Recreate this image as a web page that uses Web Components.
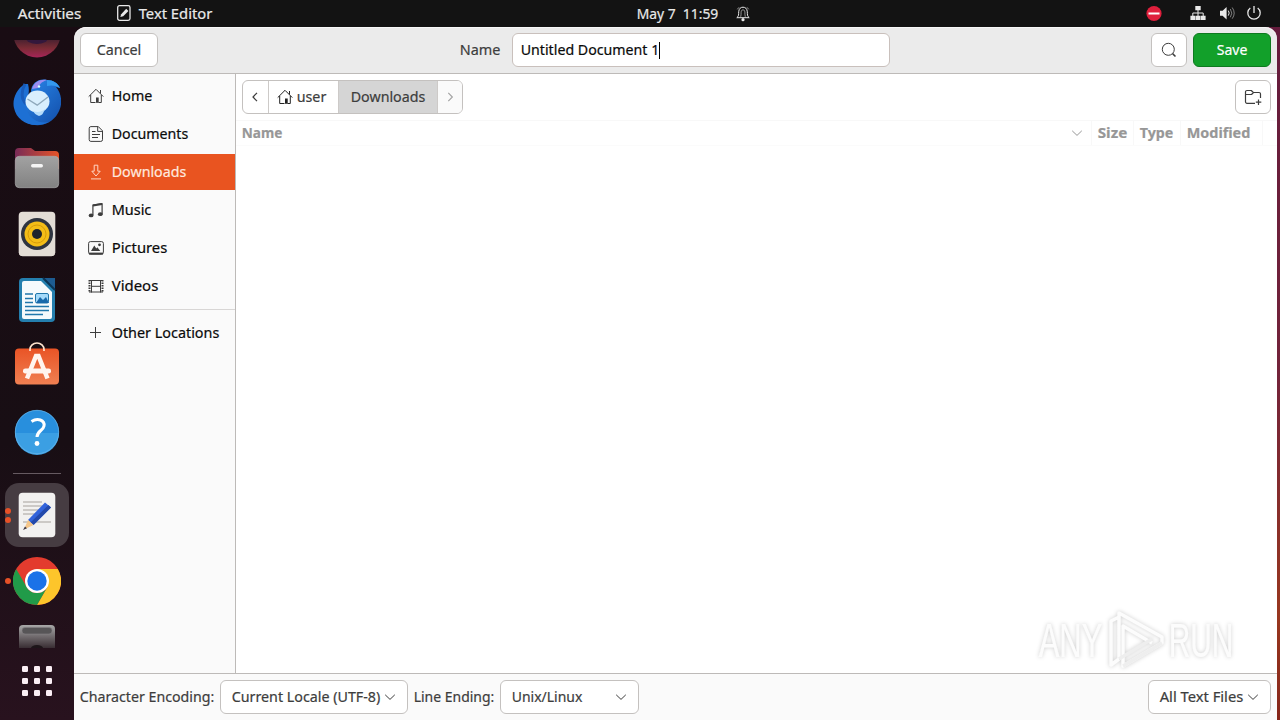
<!DOCTYPE html>
<html lang="en">
<head>
<meta charset="utf-8">
<title>Text Editor</title>
<style>
html,body{margin:0;height:100%;overflow:hidden;background:#1a0d14}
body{font:14.5px/20px "Noto Sans","Open Sans",sans-serif;color:#3d3d3d}
</style>
</head>
<body>
<desktop-shell></desktop-shell>
<script>
const define = (name, html) => {
  const t = document.createElement('template');
  t.innerHTML = html;
  customElements.define(name, class extends HTMLElement {
    constructor() {
      super();
      this.attachShadow({mode: 'open'}).append(t.content.cloneNode(true));
    }
  });
};

/* Symbolic 16px icons */
const glyphs = {
  home: '<path d="M.7 8.6 8 1.3l7.3 7.3M2.7 7v7.500h4.800M10.500 14.500h2.800V7"/><path d="M12.500 2v3.500" /><path d="M8 9.500h2.700v5.300H8z" fill="currentColor" stroke="none"/>',
  doc: '<path d="M2.900.6h7.400l4.200 4.200v8.900a1.700 1.700 0 0 1-1.700 1.700H2.900a1.700 1.700 0 0 1-1.700-1.700V2.300A1.700 1.700 0 0 1 2.900.6zM9.700.8v4.600h4.700M4 5.500h3.500M4 8.500h8M4 11.500h6"/>',
  down: '<path d="M6.200 1.200h3.600v6h2.400L8 12 3.800 7.200h2.400zM3 14.900h10"/>',
  music: '<path d="M4.900 13V3l9.200-1.500v10.500" stroke-width="1.200"/><path d="M4.900 3.500l9.200-1.500" stroke-width="2"/><ellipse cx="3.100" cy="13.400" rx="2.400" ry="1.900" fill="currentColor" stroke="none"/><ellipse cx="12.300" cy="12.200" rx="2.400" ry="1.900" fill="currentColor" stroke="none"/>',
  pic: '<rect x=".6" y="1.600" width="14.800" height="12.600" rx="1.800"/><path d="M1 12.600h14v1.900H1z" fill="currentColor" stroke="none"/><path d="M3 11 6.300 5.500 8.300 8.500l1-1.200L12.300 11z" fill="currentColor" stroke="none"/><circle cx="11.500" cy="4.800" r="1.400" fill="currentColor" stroke="none"/>',
  video: '<path d="M3.500 2v12.500M12.500 2v12.500M1 2.500h14M1 14h14M3.500 8.300h9"/><path d="M1.500 2v12.500M14.500 2v12.500" stroke-dasharray="1.500 1" stroke-width="2"/>',
  plus: '<path d="M7.500 2v11M2 7.500h11"/>',
  search: '<circle cx="7.300" cy="7.300" r="6"/><path d="m11.600 11.600 2.900 2.900" stroke-width="1.500"/>',
  left: '<path d="M9 3.800 5 8l4 4.200" stroke-width="1.200"/>',
  right: '<path d="M6.300 3.800 10.300 8l-4 4.200" stroke-width="1.200"/>',
  chevron: '<path d="m3.200 5.800 4.800 4.600 4.800-4.600"/>',
  folder: '<path d="M10 14.300H2A1.500 1.500 0 0 1 .5 12.800V3A1.500 1.500 0 0 1 2 1.500h4.300L8.300 3.500H14A1.500 1.500 0 0 1 15.500 5v4M.5 5.500h6l2-2M13.500 10.500v5.500M10.800 13.200h5.500" stroke-width="1.200"/>',
  editor: '<rect x="1.700" y=".7" width="12.300" height="14.600" rx="1.800" stroke-width="1.300"/><path d="M4.300 12 5.200 9.200l5-5.400 2.200 2.200-5.200 5.300z" fill="currentColor" stroke="none"/>',
  bell: '<path d="M1.800 12.700c2.200-1.500 1.700-3.200 1.900-6C4 3.500 5.700 2.200 8 2.200s4 1.300 4.300 4.500c.2 2.800-.3 4.500 1.900 6z"/><path d="M5.700 11.800c.5-1.500.3-3.300.4-4.600.1-1.600.8-2.300 1.900-2.300s1.800.7 1.900 2.300c.1 1.300-.1 3.100.4 4.600M2.300 4.300 4 2.300M13.700 4.300 12 2.300" stroke-width=".6"/><circle cx="8" cy="14.700" r="1.600" fill="currentColor" stroke="none"/>',
  net: '<path d="M5.300 1h5.400v4.200H5.300zM.4 10.700h4.800V15H.4zM5.600 10.700h4.800V15H5.600zM10.800 10.700h4.800V15h-4.800z" fill="currentColor" stroke="none"/><path d="M8 5v6M2.800 11V8h10.400v3"/>',
  volume: '<path d="M1 5.700h2.600L7.600 2v12.500l-4-3.700H1z" fill="currentColor" stroke="none"/><path d="M9.300 5.600q1.800 2.400 0 5"/><path d="M11.300 4q3 4.200 0 8.300M13.200 2.500q4 5.700 0 11.200" opacity=".5"/>',
  power: '<path d="M4.300 3a6.200 6.200 0 1 0 7.400 0M8 1v7" stroke-width="1.300"/>',
  stop: '<circle cx="8" cy="8.500" r="7.600" fill="#df1f3c" stroke="none"/><path d="M2.500 8.500h11" stroke="#fff" stroke-width="2"/>'
};
customElements.define('sym-icon', class extends HTMLElement {
  constructor() {
    super();
    this.attachShadow({mode: 'open'}).innerHTML = `<style>:host{display:block;flex:none;width:16px;height:16px}svg{display:block}</style>
      <svg width="16" height="16" viewBox="0 0 16 16" overflow="visible" fill="none" stroke="currentColor" stroke-linejoin="round">${glyphs[this.getAttribute('name')]}</svg>`;
  }
});

/* Launcher artwork, 48px */
const art = {
  ring: '<defs><linearGradient id="g" x1="0" y1="0" x2="0" y2="1"><stop offset=".6" stop-color="#44202f"/><stop offset=".8" stop-color="#7a2c35"/><stop offset="1" stop-color="#a62458"/></linearGradient></defs><circle cx="24" cy="21" r="23.500" fill="url(#g)"/><ellipse cx="24" cy="25" rx="11" ry="6" fill="#33183c"/>',
  bird: '<defs><linearGradient id="g" x1="0" y1="0" x2="1" y2="1"><stop stop-color="#2b8cf0"/><stop offset="1" stop-color="#124da8"/></linearGradient></defs><path d="M18 14C18 5 26 0 34 2c6 0 11 3 13 8l-4-1c6 7 7 18 2 26-8 15-29 16-38 4z" fill="url(#g)"/><path d="M19 11c2-7 8-10 15-9-6 2-8 5-9 8z" fill="#9d8df0"/><path d="M34 2c6 0 11 3 13 8-5-3-9-3-13-2z" fill="#3498ed"/><path d="M12 6C3 11-1 22 1 30c2 10 11 17 22 17 5 0 9-1 13-3-9 2-19-2-22-12-2-8 4-15 1-26z" fill="#1d70d4"/><path d="M12 6C8 13 8 21 13 26" fill="none" stroke="#185bb9" stroke-width="3"/><ellipse cx="24.500" cy="23.500" rx="12" ry="11" fill="#d9effd"/><path d="m14.500 21 9.700 6.200L35 19" fill="none" stroke="#8fa9bb" stroke-width="1.400"/><path d="M20 33c4 2 9 1 12-2-2 4-2 6-6 7-3-1-5-3-6-5z" fill="#b5dcfa"/><circle cx="26" cy="8.500" r="1.200" fill="#dff"/>',
  files: '<defs><linearGradient id="g"><stop stop-color="#782b57"/><stop offset="1" stop-color="#e65428"/></linearGradient><linearGradient id="h" x1="0" y1="0" x2="0" y2="1"><stop stop-color="#a2a2a2"/><stop offset="1" stop-color="#828282"/></linearGradient></defs><path d="M2 8a4 4 0 0 1 4-4h12l4 3h20a4 4 0 0 1 4 4v14H2z" fill="url(#g)"/><rect x="2.300" y="12.300" width="43.400" height="31.400" rx="4" fill="url(#h)" stroke="#aaa" stroke-width=".7"/><rect x="18" y="20" width="12" height="3.500" rx="1.700" fill="#f5f5f5"/>',
  speaker: '<rect x="5.700" y="1.700" width="36.600" height="44.600" rx="4" fill="#e3ddd6"/><circle cx="24" cy="24" r="16" fill="#2e3440"/><circle cx="24" cy="24" r="12.500" fill="#f4bd17"/><circle cx="24" cy="24" r="9" fill="none" stroke="#d69c0a"/><circle cx="24" cy="24" r="5" fill="#20242c"/>',
  writer: '<path d="M6 6a4 4 0 0 1 4-4h20l12 12v28a4 4 0 0 1-4 4H10a4 4 0 0 1-4-4z" fill="#247fae"/><path d="M31 2h11v12z" fill="#1d5c91"/><path d="m30 2 12 12" stroke="#0a3555" stroke-width="2"/><path d="M9 7a2 2 0 0 1 2-2h17l11 11v25a2 2 0 0 1-2 2H11a2 2 0 0 1-2-2z" fill="#f5fafc"/><path d="M12 18h8M12 22.500h8M12 26.500h8M12 30.500h24M12 34.500h24M12 38.500h18" stroke="#2077ab" stroke-width="1.700"/><rect x="22.500" y="17.500" width="13" height="9.500" rx="1.500" fill="#a4dafa" stroke="#2077ab"/><path d="m23 27 4-6 3 3 3-3 3 6z" fill="#1769ab"/>',
  store: '<defs><linearGradient id="g" x1="0" y1="0" x2="0" y2="1"><stop stop-color="#e95426"/><stop offset="1" stop-color="#f08052"/></linearGradient></defs><rect x="2" y="6.500" width="44" height="36" rx="4" fill="url(#g)"/><path d="M17 9V7.500a7 6.500 0 0 1 14 0V9" fill="none" stroke="#ffe4ce" stroke-width="1.700"/><path d="M14 36.500 23 14h2.500L34.500 36.500" fill="none" stroke="#fff5ef" stroke-width="4.500"/><rect x="10" y="26.500" width="28" height="5" rx="2.300" fill="#fff5ef"/>',
  help: '<circle cx="24" cy="24" r="22" fill="#288fdd"/><path d="M2 25h44a22 22 0 0 1-44 0z" fill="#3b9fe3"/><circle cx="24" cy="24" r="21.700" fill="none" stroke="#68b6ea" stroke-width=".7"/><path d="M18.500 13.500c6-4 13.500-1.500 12.500 4.500-.7 4.500-7 5-7 11" fill="none" stroke="#fff" stroke-width="3"/><circle cx="24" cy="35.500" r="2.400" fill="#fff"/>',
  note: '<rect x="5.700" y="1.700" width="36.600" height="44.600" rx="4" fill="#f2f1f0"/><path d="M10 11h19M10 15h19M10 19h18M10 23h14M10 31h28" stroke="#c0bcb8" stroke-width="1.300"/><path d="m15 29 17-17.500 6 5L20.500 34z" fill="#3263db"/><path d="m17.500 31.500 18-17.500 2.500 2.500L20.500 34z" fill="#2449aa"/><path d="m15 29 5.500 5L11 38.500z" fill="#f4c589"/><path d="m12 35.500 2 1.700L10 39z" fill="#3d3846"/>',
  chrome: '<circle cx="24" cy="24" r="24" fill="#e33b2e"/><path d="M24 12h20.800A24 24 0 0 1 24 48l10.400-18z" fill="#fdc52b"/><path d="M3.200 12A24 24 0 0 0 24 48l10.400-18A12 12 0 0 1 13.600 30z" fill="#219b49"/><circle cx="24" cy="24" r="12" fill="#fff"/><circle cx="24" cy="24" r="9.700" fill="#1b72e8"/>',
  disk: '<defs><linearGradient id="g" x1="0" y1="0" x2="0" y2="1"><stop stop-color="#a8a8a8"/><stop offset=".55" stop-color="#33272d"/></linearGradient></defs><rect x="6" y="2" width="36" height="44" rx="4" fill="url(#g)"/><rect x="9" y="4.500" width="30" height="6.500" rx="3" fill="#575557" stroke="#858085" stroke-width=".6"/><ellipse cx="24" cy="25" rx="6" ry="3" fill="#1d1519"/>',
  grid: [9,21,33].map(y => [9,21,33].map(x => `<rect x="${x}" y="${y}" width="6" height="6" rx="1.300" fill="#fbeff5"/>`).join('')).join('')
};
customElements.define('dock-item', class extends HTMLElement {
  constructor() {
    super();
    const dots = +this.getAttribute('dots') || 0;
    this.attachShadow({mode: 'open'}).innerHTML = `<style>
      :host{display:flex;flex:none;height:66px;position:relative;align-items:center;justify-content:center;overflow:hidden}
      :host([first]){height:29px;margin-top:13px;align-items:flex-start}
      :host([first]) svg{margin-top:-27px}
      :host([last]){height:34px;align-items:flex-start}
      :host([last]) svg{margin-top:9px}
      .tile{display:flex;width:64px;height:64px;align-items:center;justify-content:center;border-radius:14px}
      :host([active]) .tile{background:#463c42}
      :host([first]) .tile,:host([last]) .tile{align-items:flex-start;height:auto}
      .dots{position:absolute;left:5px;top:0;bottom:0;display:flex;flex-direction:column;gap:3px;justify-content:center}
      .dots i{width:6px;height:6px;border-radius:50%;background:#e65127}
      svg{display:block;flex:none}
    </style><div class="tile"><svg width="48" height="48" viewBox="0 0 48 48">${art[this.getAttribute('art')]}</svg></div><div class="dots">${'<i></i>'.repeat(dots)}</div>`;
  }
});

define('app-dock', `<style>
  :host{display:flex;flex-direction:column;flex:none;width:74px;background:linear-gradient(#190c13,#180e14 60%,#28121e)}
  hr{flex:none;width:48px;height:1px;border:0;margin:8px auto;background:#665a61}
</style>
<dock-item art="ring" first></dock-item><dock-item art="bird"></dock-item><dock-item art="files"></dock-item>
<dock-item art="speaker"></dock-item><dock-item art="writer"></dock-item><dock-item art="store"></dock-item>
<dock-item art="help"></dock-item><hr><dock-item art="note" active dots="2"></dock-item>
<dock-item art="chrome" dots="1"></dock-item><dock-item art="disk" last></dock-item><dock-item art="grid"></dock-item>`);

define('top-bar', `<style>
  :host{display:grid;grid-template-columns:1fr auto 1fr;height:27px;flex:none;background:#131313;color:#e9e9e9;align-items:center}
  div{display:flex;align-items:center}
  sym-icon{margin-bottom:2px}
  .l{padding-left:17px}.l sym-icon{margin:0 6px 1px 34px}
  .c{gap:16px;padding-left:107px}
  .r{justify-content:flex-end;padding-right:18px}
</style>
<div class="l"><fit-text w="65">Activities</fit-text><sym-icon name="editor"></sym-icon><fit-text w="75">Text Editor</fit-text></div>
<div class="c"><fit-text w="83">May 7&nbsp; 11:59</fit-text><sym-icon name="bell"></sym-icon></div>
<div class="r"><sym-icon name="stop" style="margin-right:28px"></sym-icon><sym-icon name="net" style="margin-right:13px"></sym-icon><sym-icon name="volume" style="margin-right:11px"></sym-icon><sym-icon name="power"></sym-icon></div>`);

define('push-button', `<style>
  :host{display:flex;box-sizing:border-box;height:34px;align-items:center;justify-content:center;flex:none;background:#fff;border:1px solid #c4c1bf;border-radius:6px}
  :host([primary]){background:#12a02a;border-color:#0d7a1f;color:#fff}
</style><slot></slot>`);

define('dialog-header', `<style>
  :host{display:flex;box-sizing:border-box;height:47px;flex:none;align-items:center;padding:0 6px;background:#ebebeb;border-bottom:1px solid #bdbab8;border-radius:12px 12px 0 0;box-shadow:inset 0 1px #f7f7f7}
  .name{margin:0 auto;display:flex;align-items:center;gap:11px;padding-left:40px}
  .entry{display:flex;align-items:center;box-sizing:border-box;width:378px;height:34px;padding-left:7px;border:1px solid #c9c0bc;border-radius:6px;background:#fff;color:#0a0a0a}
  .caret{width:1px;height:17px;background:#000;margin-left:-1px}
</style>
<push-button style="width:78px"><fit-text w="46">Cancel</fit-text></push-button>
<div class="name"><fit-text w="42">Name</fit-text><div class="entry"><fit-text w="140">Untitled Document 1</fit-text><div class="caret"></div></div></div>
<push-button style="width:36px;margin-right:6px"><sym-icon name="search"></sym-icon></push-button>
<push-button primary style="width:78px"><fit-text w="32">Save</fit-text></push-button>`);

define('place-row', `<style>
  :host{display:flex;flex:none;height:36px;margin-bottom:2px;align-items:center;gap:7px;padding-left:14px;color:#0a0a0a}
  ::slotted(sym-icon){color:#3d3d3d}
  :host([selected]){background:#e95420;color:#ffe9df}
  :host([selected]) ::slotted(sym-icon){color:#ffd5c3}
</style><slot></slot>`);

define('places-sidebar', `<style>
  :host{display:flex;flex-direction:column;box-sizing:border-box;width:162px;flex:none;padding-top:4px;background:#fafafa;border-right:1px solid #bdbab8}
  hr{width:100%;height:1px;margin:3px 0 5px;border:0;background:#d8d6d5}
</style>
<place-row><sym-icon name="home"></sym-icon><fit-text w="42">Home</fit-text></place-row>
<place-row><sym-icon name="doc"></sym-icon><fit-text w="78">Documents</fit-text></place-row>
<place-row selected><sym-icon name="down"></sym-icon><fit-text w="76">Downloads</fit-text></place-row>
<place-row><sym-icon name="music"></sym-icon><fit-text w="41">Music</fit-text></place-row>
<place-row><sym-icon name="pic"></sym-icon><fit-text w="57">Pictures</fit-text></place-row>
<place-row><sym-icon name="video"></sym-icon><fit-text w="48">Videos</fit-text></place-row>
<hr>
<place-row><sym-icon name="plus"></sym-icon><fit-text w="109">Other Locations</fit-text></place-row>`);

define('path-bar', `<style>
  :host{display:flex;box-sizing:border-box;width:221px;height:34px;border:1px solid #c4c1bf;border-radius:6px;overflow:hidden;background:#fff}
  div{display:flex;align-items:center;justify-content:center;box-sizing:border-box;border-right:1px solid #cdcac8}
  div:last-child{border:0}
</style>
<div style="width:26px"><sym-icon name="left"></sym-icon></div>
<div style="width:70px;gap:3px;padding-right:4px"><sym-icon name="home" style="color:#222"></sym-icon><fit-text w="31">user</fit-text></div>
<div style="width:99px;background:#d5d5d5"><fit-text w="76">Downloads</fit-text></div>
<div style="flex:1;background:#fafafa;color:#a5a5a5"><sym-icon name="right"></sym-icon></div>`);

define('file-list', `<style>
  :host{display:flex;flex-direction:column;flex:1;background:#fff}
  .bar{display:flex;justify-content:space-between;padding:6px 6px 0}
  .head{display:flex;box-sizing:border-box;height:26px;margin-top:6px;align-items:center;border-top:1px solid #f8f8f8;border-bottom:1px solid #fbfbfb;color:#979797;font-weight:700}
  .head div{display:flex;box-sizing:border-box;align-self:stretch;align-items:center;padding-left:5px;border-right:1px solid #f8f8f8}
</style>
<div class="bar"><path-bar></path-bar><push-button style="width:36px"><sym-icon name="folder"></sym-icon></push-button></div>
<div class="head"><div style="width:856px;justify-content:space-between;padding-right:6px"><fit-text w="42">Name</fit-text><sym-icon name="chevron"></sym-icon></div><div style="width:42px"><fit-text w="31">Size</fit-text></div><div style="width:47px;padding-left:5px"><fit-text w="35">Type</fit-text></div><div style="width:82px;padding-left:5px"><fit-text w="65">Modified</fit-text></div></div>`);

define('options-bar', `<style>
  :host{display:flex;box-sizing:border-box;height:47px;flex:none;align-items:center;padding:0 6px 0 5px;background:#fafafa;border-top:1px solid #bdbab8}
  push-button{justify-content:space-between;box-sizing:border-box;padding:0 9px 0 10px}
</style>
<fit-text w="136">Character Encoding:</fit-text>
<push-button style="width:188px;margin:0 5px"><fit-text w="150">Current Locale (UTF-8)</fit-text><sym-icon name="chevron"></sym-icon></push-button>
<fit-text w="82">Line Ending:</fit-text>
<push-button style="width:139px;margin-left:5px"><fit-text w="72">Unix/Linux</fit-text><sym-icon name="chevron"></sym-icon></push-button>
<push-button style="width:123px;margin-left:auto"><fit-text w="85">All Text Files</fit-text><sym-icon name="chevron"></sym-icon></push-button>`);

define('brand-mark', `<style>
  :host{display:flex;position:absolute;left:1038px;top:608px;height:66px;align-items:center;font:49px/66px "Liberation Sans",sans-serif;color:#fcfcfc;-webkit-text-stroke:.8px #fcfcfc;filter:drop-shadow(0 0 2px #0003)}
  svg{margin:0 1px 0 4px}
</style>
<fit-text w="65">ANY</fit-text>
<svg width="60" height="66" viewBox="0 0 60 66" fill="none" stroke="#fcfcfc" stroke-width="3.500" stroke-linejoin="round"><path d="M12 51V5l43 24v6L16 58V18l29 17M12 51 4 57V13l8-4"/><path d="m16 58 39-23M12 51l33-20" stroke="#eee"/></svg>
<fit-text w="66">RUN</fit-text>`);

define('desktop-shell', `<style>
  :host{display:flex;flex-direction:column;width:1280px;height:720px;overflow:hidden}
  .work{display:flex;flex:1;min-height:0;background:linear-gradient(90deg,#190c13 50%,transparent 50%),linear-gradient(#641b3c,#73233a 50%,#98371f 85%,#852519)}
  .dialog{display:flex;flex-direction:column;width:1203px;flex:none;border-radius:12px 12px 0 0}
  .body{display:flex;flex:1;min-height:0}
</style>
<top-bar></top-bar>
<div class="work"><app-dock></app-dock>
<div class="dialog"><dialog-header></dialog-header><div class="body"><places-sidebar></places-sidebar><file-list></file-list></div><options-bar></options-bar></div></div>
<brand-mark></brand-mark>`);

/* A single-line label condensed to its w attribute; registered last, when every label is laid out. */
customElements.define('fit-text', class extends HTMLElement {
  constructor() {
    super();
    this.attachShadow({mode: 'open'}).innerHTML = '<style>:host{display:block;flex:none;white-space:nowrap;-webkit-text-stroke-width:.2px}span{display:inline-block;transform-origin:0 50%}</style><span><slot></slot></span>';
  }
  connectedCallback() {
    const w = +this.getAttribute('w'), span = this.shadowRoot.querySelector('span');
    this.style.width = w + 'px';
    span.style.transform = `translate(.7px,-1px) scaleX(${(w - 1.4) / span.getBoundingClientRect().width})`;
  }
});
</script>
</body>
</html>
